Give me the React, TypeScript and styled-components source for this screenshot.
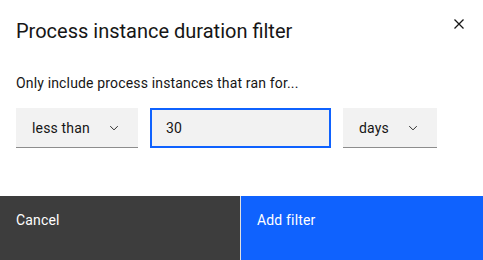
import React from "react";
import styled, { createGlobalStyle } from "styled-components";

const Global = createGlobalStyle`
  html, body { margin: 0; padding: 0; background: #ffffff; }
  body { font-family: Roboto, "Noto Sans", Arial, sans-serif; color: #161616; }
  * { box-sizing: border-box; }
`;

const Modal = styled.div`
  width: 483px;
  height: 260px;
  background: #ffffff;
  display: flex;
  flex-direction: column;
  position: relative;
`;

const Header = styled.div`
  padding: 15px 48px 0 16px;
  height: 64px;
`;

const Title = styled.h3`
  margin: 0;
  font-size: 20px;
  font-weight: 400;
  line-height: 32px;
  color: #161616;
`;

const CloseButton = styled.button`
  position: absolute;
  top: 0;
  right: 0;
  width: 48px;
  height: 48px;
  border: none;
  background: transparent;
  display: flex;
  align-items: center;
  justify-content: center;
  padding: 0;
  cursor: pointer;
`;

const Body = styled.div`
  padding: 10px 16px 0 16px;
  flex: 1;
`;

const Lead = styled.p`
  margin: 0 0 16px 0;
  font-size: 14px;
  line-height: 18px;
  letter-spacing: 0.16px;
  color: #161616;
`;

const Row = styled.div`
  display: flex;
  gap: 12px;
  align-items: flex-start;
`;

const Select = styled.div<{ $w: number }>`
  width: ${(p) => p.$w}px;
  height: 40px;
  background: #f2f2f2;
  border-bottom: 1px solid #8d8d8d;
  display: flex;
  align-items: center;
  justify-content: space-between;
  padding: 0 18px 0 16px;
  font-size: 14px;
  letter-spacing: 0.16px;
  color: #161616;
`;

const Input = styled.div`
  width: 181px;
  height: 40px;
  background: #f2f2f2;
  border: 2px solid #0f62fe;
  display: flex;
  align-items: center;
  padding: 0 14px;
  font-size: 14px;
  letter-spacing: 0.16px;
  color: #161616;
`;

const Footer = styled.div`
  display: flex;
  height: 64px;
  gap: 1px;
  background: #e0e0e0;
`;

const FooterButton = styled.button<{ $primary?: boolean }>`
  flex: ${(p) => (p.$primary ? "0 0 242px" : "0 0 240px")};
  height: 64px;
  border: none;
  margin: 0;
  background: ${(p) => (p.$primary ? "#0f62fe" : "#3d3d3d")};
  color: #ffffff;
  font-family: inherit;
  font-size: 14px;
  line-height: 18px;
  letter-spacing: 0.16px;
  text-align: left;
  display: flex;
  align-items: flex-start;
  padding: 15px 16px;
`;

const Chevron = () => (
  <svg width="12" height="12" viewBox="0 0 16 16" fill="none">
    <path d="M3 5.5 L8 10.5 L13 5.5" stroke="#161616" strokeWidth="1.2" />
  </svg>
);

const CloseIcon = () => (
  <svg width="12" height="12" viewBox="0 0 12 12" fill="none">
    <path d="M1.5 1.5 L10.5 10.5 M10.5 1.5 L1.5 10.5" stroke="#161616" strokeWidth="1.3" />
  </svg>
);

export default function App() {
  return (
    <>
      <Global />
      <Modal>
        <Header>
          <Title>Process instance duration filter</Title>
        </Header>
        <CloseButton aria-label="Close">
          <CloseIcon />
        </CloseButton>
        <Body>
          <Lead>Only include process instances that ran for...</Lead>
          <Row>
            <Select $w={122}>
              <span>less than</span>
              <Chevron />
            </Select>
            <Input>30</Input>
            <Select $w={94}>
              <span>days</span>
              <Chevron />
            </Select>
          </Row>
        </Body>
        <Footer>
          <FooterButton>Cancel</FooterButton>
          <FooterButton $primary>Add filter</FooterButton>
        </Footer>
      </Modal>
    </>
  );
}
